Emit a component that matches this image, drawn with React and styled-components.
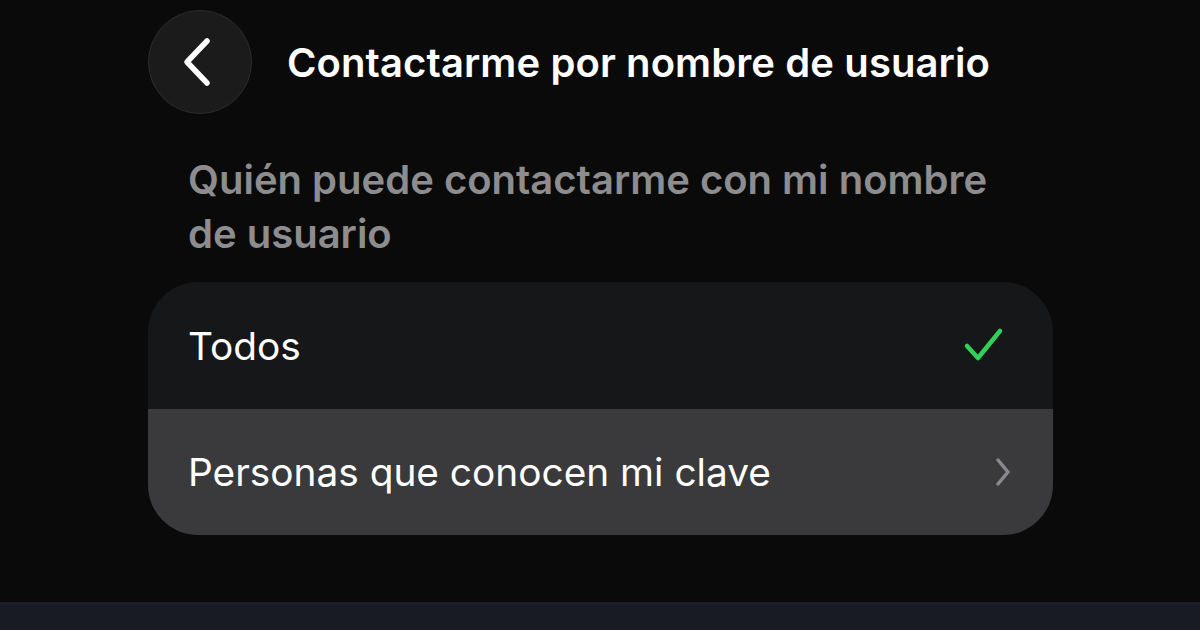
import React from 'react';
import styled, { createGlobalStyle } from 'styled-components';

const GlobalStyle = createGlobalStyle`
  html, body {
    margin: 0;
    padding: 0;
    background: #0a0a0a;
  }
  body {
    font-family: Inter, "Noto Sans", "Liberation Sans", sans-serif;
    -webkit-font-smoothing: antialiased;
  }
`;

function BackIcon() {
  return (
    <svg width="32" height="50" viewBox="0 0 32 50" fill="none">
      <path d="M26 4 L6 25 L26 46" stroke="#fff" strokeWidth="5.5" strokeLinecap="round" strokeLinejoin="round" />
    </svg>
  );
}

function CheckIcon() {
  return (
    <svg width="42" height="38" viewBox="0 0 42 38" fill="none">
      <path d="M4 20 L15 32 L37 5" stroke="#30d158" strokeWidth="4.5" strokeLinecap="round" strokeLinejoin="round" />
    </svg>
  );
}

function ChevronIcon() {
  return (
    <svg width="20" height="32" viewBox="0 0 20 32" fill="none">
      <path d="M5 4 L15 16 L5 28" stroke="#8a8a8e" strokeWidth="3.5" strokeLinecap="round" strokeLinejoin="round" />
    </svg>
  );
}

function App() {
  return (
    <>
      <GlobalStyle />
      <Screen>
        <Content>
          <TopBar>
            <BackButton aria-label="Atrás">
              <BackIcon />
            </BackButton>
            <Title>Contactarme por nombre de usuario</Title>
          </TopBar>

          <SectionLabel>Quién puede contactarme con mi nombre de usuario</SectionLabel>

          <OptionList>
            <Option>
              <span>Todos</span>
              <Accessory $inset={8}>
                <CheckIcon />
              </Accessory>
            </Option>
            <Option $muted>
              <span>Personas que conocen mi clave</span>
              <Accessory>
                <ChevronIcon />
              </Accessory>
            </Option>
          </OptionList>
        </Content>
        <BottomBar />
      </Screen>
    </>
  );
}

const Screen = styled.div`
  width: 1200px;
  height: 630px;
  display: flex;
  flex-direction: column;
  background: #0a0a0a;
  overflow: hidden;
`;

const Content = styled.main`
  flex: 1;
  padding: 10px 0 0 148px;
  width: 905px;
`;

const TopBar = styled.header`
  display: flex;
  align-items: center;
  gap: 35px;
`;

const BackButton = styled.button`
  width: 104px;
  height: 104px;
  border-radius: 50%;
  background: #1b1b1c;
  border: 1.5px solid #2c2c2e;
  display: flex;
  align-items: center;
  justify-content: center;
  padding: 0 6px 0 0;
  box-sizing: border-box;
  cursor: pointer;
`;

const Title = styled.h1`
  margin: 0;
  color: #fff;
  font-size: 40px;
  font-weight: 600;
  letter-spacing: 0.1px;
`;

const SectionLabel = styled.p`
  margin: 39px 0 0 40px;
  width: 830px;
  color: #8d8d8f;
  font-size: 40px;
  font-weight: 600;
  line-height: 54px;
`;

const OptionList = styled.ul`
  list-style: none;
  margin: 21px 0 0;
  padding: 0;
  border-radius: 50px;
  overflow: hidden;
`;

const Option = styled.li`
  height: 126.5px;
  box-sizing: border-box;
  display: flex;
  align-items: center;
  justify-content: space-between;
  padding: 0 40px 0 40px;
  background: ${p => (p.$muted ? '#3a3a3c' : '#161718')};
  color: #fff;
  font-size: 38.8px;
  font-weight: 400;
`;

const Accessory = styled.span`
  display: flex;
  align-items: center;
  margin-right: ${p => p.$inset || 0}px;
`;

const BottomBar = styled.footer`
  height: 25px;
  background: #181b24;
  border-top: 3px solid #1c1f25;
`;

export default App;
